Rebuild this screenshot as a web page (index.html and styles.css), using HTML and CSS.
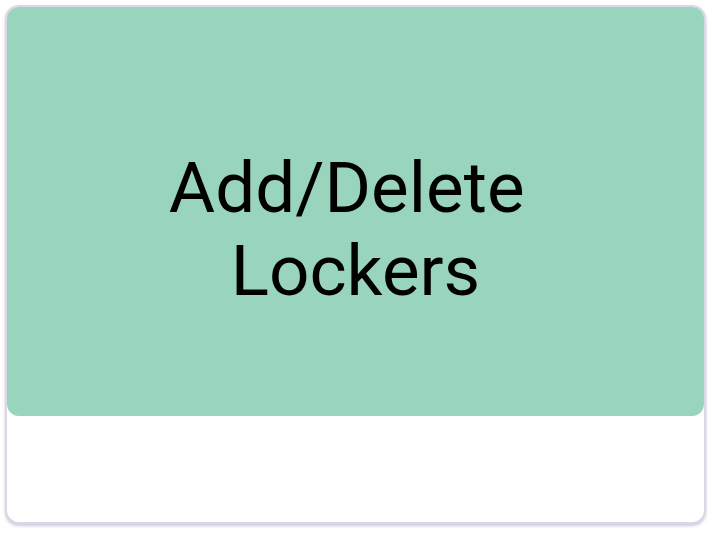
FILE: index.html
```html
<!DOCTYPE html>
<html>
<head>
<meta charset="utf-8">
<link rel="stylesheet" href="styles.css">
</head>
<body>
<div class="card">
  <div class="media">
    <div class="title">Add/Delete&nbsp;<br>Lockers</div>
  </div>
  <div class="footer"></div>
</div>
</body>
</html>
```
FILE: styles.css
```css
html, body {
  margin: 0;
  padding: 0;
  background: #ffffff;
}
body {
  padding: 5px 6px 8px 5px;
  font-family: Roboto, "Noto Sans", sans-serif;
}
.card {
  height: 519px;
  box-sizing: border-box;
  border: 2px solid #ddd5ea;
  border-radius: 14px;
  background: #fff;
  box-shadow: 0 2px 3px rgba(120, 100, 150, 0.35);
  display: flex;
  flex-direction: column;
}
.media {
  height: 409px;
  flex: none;
  background: #99d5bd;
  border-radius: 12px;
  display: flex;
  justify-content: center;
  box-sizing: border-box;
  padding-top: 139px;
}
.title {
  font-size: 71px;
  line-height: 83px;
  color: #000;
  text-align: center;
}
.footer {
  flex: 1;
}
```
